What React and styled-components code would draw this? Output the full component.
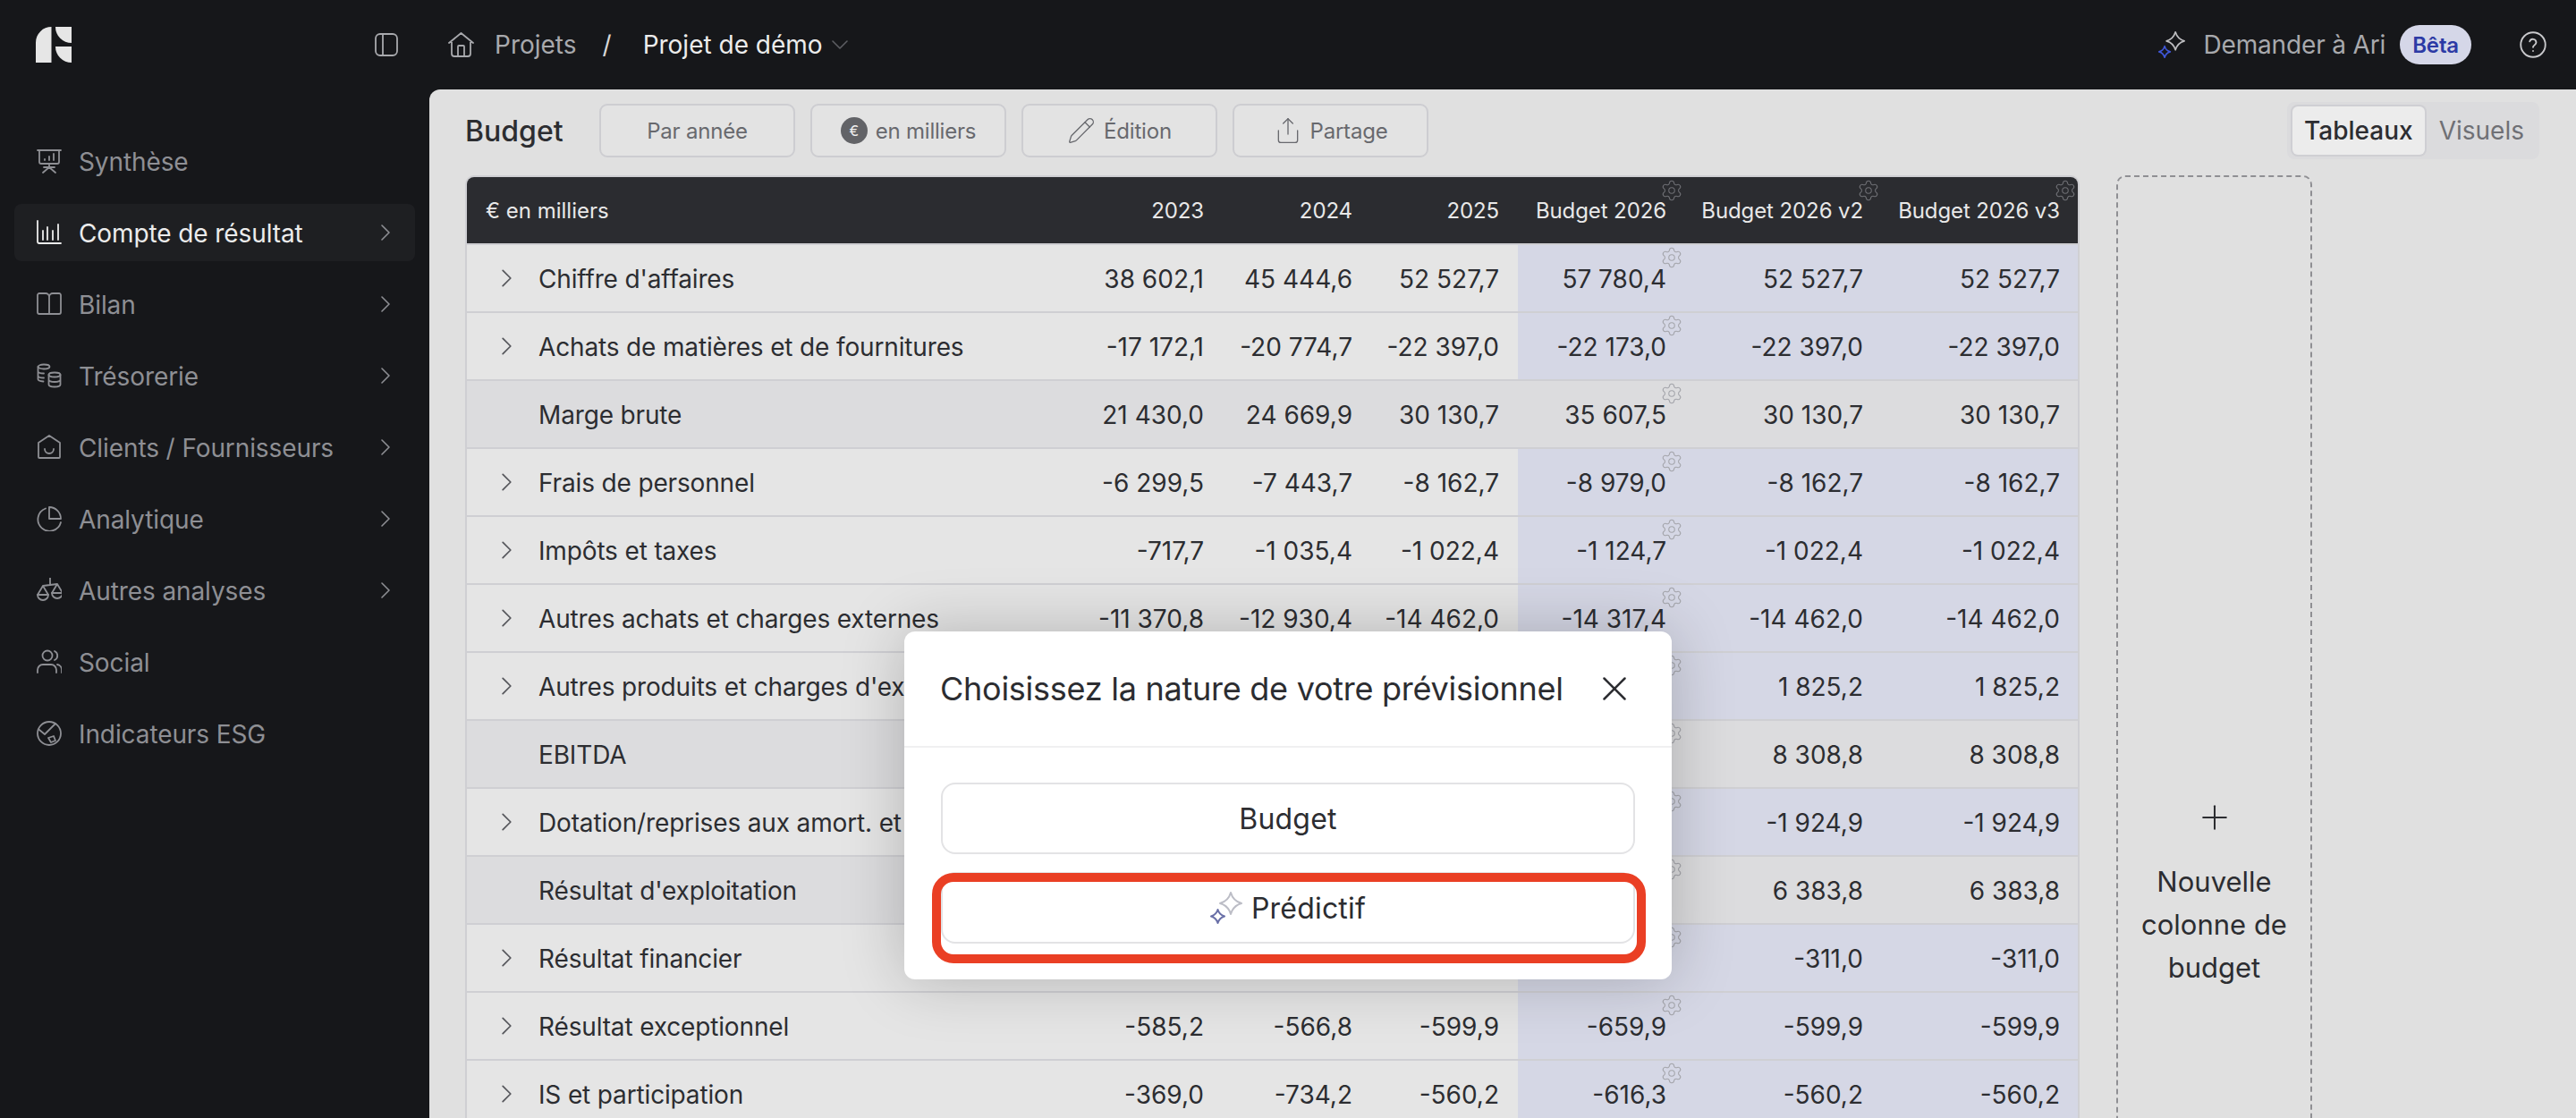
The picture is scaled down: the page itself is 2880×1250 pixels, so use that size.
import React from 'react'
import styled, { createGlobalStyle } from 'styled-components'
import { Settings, Share, X, Plus, Pencil } from 'lucide-react'

const GlobalStyle = createGlobalStyle`
  * { box-sizing: border-box; }
  html, body { margin: 0; padding: 0; background: #16171a; }
  body { font-family: Inter, "Noto Sans", sans-serif; }
`

const Page = styled.div`
  position: relative;
  width: 2880px;
  height: 1250px;
  overflow: hidden;
  display: flex;
  flex-direction: column;
  background: #16171a;
`

const TopBar = styled.header`
  height: 100px;
  flex-shrink: 0;
  display: flex;
  align-items: center;
  padding-right: 33px;
`

const Brand = styled.div`
  width: 480px;
  display: flex;
  align-items: center;
  justify-content: space-between;
  padding: 0 35px 0 40px;
  color: #a8a9ad;
`

const Crumbs = styled.nav`
  display: flex;
  align-items: center;
  padding-left: 21px;
  font-size: 28px;
  color: #a8a9ad;
`

const CrumbText = styled.span`
  margin-left: 23px;
`

const Slash = styled.span`
  margin: 0 35px 0 29px;
  color: #d8d8d8;
`

const CurrentCrumb = styled.span`
  color: #ececec;
`

const CaretDown = styled.svg`
  margin-left: 10px;
  color: #5d5e63;
`

const TopRight = styled.div`
  margin-left: auto;
  display: flex;
  align-items: center;
  color: #a8a9ad;
  font-size: 28px;
  letter-spacing: -0.15px;
`

const AskText = styled.span`
  margin-left: 20px;
`

const Beta = styled.span`
  margin-left: 16px;
  height: 44px;
  padding: 0 14px;
  display: flex;
  align-items: center;
  border-radius: 22px;
  background: #d5d7e8;
  color: #2c3aa5;
  font-size: 24px;
  font-weight: 600;
`

const HelpIcon = styled.svg`
  margin-left: 54px;
  color: #c9c9cc;
`

const Body = styled.div`
  flex: 1;
  min-height: 0;
  display: flex;
`

const Sidebar = styled.aside`
  width: 480px;
  flex-shrink: 0;
  padding: 48px 16px 0;
  display: flex;
  flex-direction: column;
  gap: 16px;
`

const NavItem = styled.div`
  height: 64px;
  display: flex;
  align-items: center;
  padding: 0 27px 0 25px;
  border-radius: 8px;
  font-size: 28px;
  letter-spacing: -0.1px;
  color: ${({ $active }) => ($active ? '#ececec' : '#8e8f94')};
  background: ${({ $active }) => ($active ? '#1e1f22' : 'transparent')};
`

const NavLabel = styled.span`
  margin-left: 19px;
  padding-top: 2px;
  flex: 1;
`

const Main = styled.main`
  flex: 1;
  min-width: 0;
  padding: 14px 41px 0 40px;
  background: #e0e0e0;
  border-top-left-radius: 12px;
  overflow: hidden;
`

const Toolbar = styled.div`
  height: 64px;
  display: flex;
  align-items: center;
`

const PageTitle = styled.h1`
  margin: 0 42px 0 0;
  width: 108px;
  font-size: 32px;
  font-weight: 500;
  color: #2c2d31;
`

const ToolGroup = styled.div`
  display: flex;
  gap: 17px;
`

const ToolButton = styled.div`
  width: 219px;
  height: 60px;
  display: flex;
  align-items: center;
  justify-content: center;
  gap: ${({ $gap }) => $gap || 10}px;
  border: 2px solid #cdcdd1;
  border-radius: 9px;
  background: #e3e3e3;
  color: #68696e;
  font-size: 24px;
  letter-spacing: -0.2px;
`

const EuroDot = styled.span`
  width: 30px;
  height: 30px;
  border-radius: 50%;
  display: flex;
  align-items: center;
  justify-content: center;
  background: #626367;
  color: #f0f0f0;
  font-size: 16px;
`

const Segmented = styled.div`
  margin-left: auto;
  height: 64px;
  display: flex;
  align-items: center;
  padding: 0 17px 0 6px;
  gap: 16px;
  border-radius: 8px;
  background: #dbdbdd;
`

const Segment = styled.div`
  height: 54px;
  display: flex;
  align-items: center;
  padding: ${({ $active }) => ($active ? '0 13px' : '0')};
  border-radius: 6px;
  font-size: 28px;
  font-weight: ${({ $active }) => ($active ? 450 : 400)};
  color: ${({ $active }) => ($active ? '#2c2d31' : '#6f7075')};
  background: ${({ $active }) => ($active ? '#ececec' : 'transparent')};
  box-shadow: ${({ $active }) => ($active ? '0 0 0 2px #cfcfd3' : 'none')};
`

const Content = styled.div`
  margin-top: 18px;
  display: flex;
  align-items: flex-start;
  gap: 41px;
`

const Table = styled.div`
  width: 1805px;
  flex-shrink: 0;
  border: 2px solid #cfcfd3;
  border-bottom: 0;
  border-radius: 10px 10px 0 0;
  overflow: hidden;
`

const Row = styled.div`
  display: grid;
  grid-template-columns: 678px 167px 166px 164px 187px 220px 220px;
  height: 76px;
  border-bottom: 2px solid #cfcfd3;
  background: ${({ $total }) => ($total ? '#dcdcde' : '#e5e5e5')};
`

const HeadRow = styled(Row)`
  background: #2b2c30;
`

const LabelCell = styled.div`
  display: flex;
  align-items: center;
  padding-top: 2px;
  padding-left: ${({ $flat }) => ($flat ? 80 : 38)}px;
  font-size: 28px;
  letter-spacing: -0.15px;
  color: #2c2d31;
  white-space: nowrap;
`

const Chevron = styled.svg`
  flex-shrink: 0;
  color: #8e8f94;
`

const RowChevron = styled.svg`
  flex-shrink: 0;
  margin: -2px 29px 0 0;
  color: #55565b;
`

const HeadLabel = styled.div`
  display: flex;
  align-items: center;
  padding-left: 21px;
  font-size: 24px;
  color: #e8e8e8;
`

const NumCell = styled.div`
  position: relative;
  display: flex;
  align-items: center;
  justify-content: flex-end;
  padding: 2px 21px 0 0;
  font-size: 28px;
  color: #2c2d31;
  white-space: nowrap;
  background: ${({ $budget }) => ($budget ? '#d5d7e5' : 'transparent')};
`

const HeadCell = styled(NumCell)`
  padding-top: 0;
  font-size: 24px;
  letter-spacing: -0.1px;
  color: #e8e8e8;
  background: transparent;
`

const GearSpot = styled.span`
  position: absolute;
  top: ${({ $head }) => ($head ? 2 : 1)}px;
  right: 2px;
  display: flex;
  color: ${({ $head }) => ($head ? '#6e6f74' : '#a4a5ab')};
`

const NewColumn = styled.div`
  width: 219px;
  height: 1200px;
  flex-shrink: 0;
  padding-top: 694px;
  display: flex;
  flex-direction: column;
  align-items: center;
  border: 2px dashed #8f8f93;
  border-radius: 10px;
  color: #2c2d31;
`

const NewColumnText = styled.div`
  margin-top: 26px;
  width: 190px;
  text-align: center;
  font-size: 31px;
  line-height: 48px;
`

const Overlay = styled.div`
  position: absolute;
  inset: 0;
  display: flex;
  justify-content: center;
  align-items: flex-start;
  padding-top: 706px;
`

const Modal = styled.div`
  width: 858px;
  height: 389px;
  border-radius: 12px;
  background: #ffffff;
  box-shadow: 0 0 70px rgba(0, 0, 0, 0.22);
`

const ModalHead = styled.div`
  height: 130px;
  display: flex;
  align-items: center;
  justify-content: space-between;
  padding: 0 41px 0 40px;
  border-bottom: 2px solid #f0f0f1;
`

const ModalTitle = styled.h2`
  margin: 0;
  font-size: 36px;
  font-weight: 400;
  letter-spacing: -0.26px;
  color: #2c2d31;
`

const ModalBody = styled.div`
  padding: 39px 41px 0;
  display: flex;
  flex-direction: column;
  gap: 20px;
`

const ChoiceWrap = styled.div`
  position: relative;
`

const Choice = styled.div`
  height: 80px;
  display: flex;
  align-items: center;
  justify-content: center;
  gap: 10px;
  border: 2px solid #e3e3e5;
  border-radius: 16px;
  background: #ffffff;
  font-size: 32px;
  letter-spacing: 0.2px;
  color: #2c2d31;
`

const Callout = styled.div`
  position: absolute;
  top: 1px;
  left: -10px;
  right: -12px;
  bottom: -22px;
  border: 10px solid #ea3f24;
  border-radius: 24px;
  pointer-events: none;
`

const ThinIcon = ({ size = 28, height, children, ...rest }) => (
  <svg width={size} height={height || size} viewBox={`0 0 ${size} ${height || size}`} fill="none" stroke="currentColor" strokeWidth="1.8" strokeLinecap="round" strokeLinejoin="round" {...rest}>
    {children}
  </svg>
)

const Logo = () => (
  <svg width="40" height="40" viewBox="0 0 40 40" fill="#e6e6e6">
    <path d="M0 40V17.5A17.5 17.5 0 0 1 17.5 0V40Z" />
    <path d="M22 0H40V18A18 18 0 0 1 22 0Z" />
    <path d="M22 22H40V40A18 18 0 0 1 22 22Z" />
  </svg>
)

const star = (cx, cy, r) => {
  const k = r * 0.22
  return `M${cx} ${cy - r}Q${cx + k} ${cy - k} ${cx + r} ${cy}Q${cx + k} ${cy + k} ${cx} ${cy + r}Q${cx - k} ${cy + k} ${cx - r} ${cy}Q${cx - k} ${cy - k} ${cx} ${cy - r}Z`
}

const Sparkle = ({ size, big, small }) => (
  <svg width={size} height={size} viewBox="0 0 36 36" fill="none" strokeWidth="2" strokeLinejoin="round">
    <path d={star(23, 13, 12)} stroke={big} />
    <path d={star(8.5, 27.5, 7.5)} stroke={small} />
  </svg>
)

const ChevronPath = () => <path d="M2 1L10 9L2 17" />

const navIcons = {
  synthese: (
    <>
      <path d="M1 2H27M3 2V15a2 2 0 0 0 2 2H23a2 2 0 0 0 2-2V2M14 17V21M14 21L7 27M14 21L21 27M8 21H20" />
      <path d="M9 12V13M14 9V13M19 6V13" />
    </>
  ),
  compte: <path d="M1 1V24a2 2 0 0 0 2 2H27M7 12V22M12 8V22M18 12V22M24 5V22" />,
  bilan: <path d="M14 6V25M14 6a4 4 0 0 0-4-4H3a2 2 0 0 0-2 2V23a2 2 0 0 0 2 2H25a2 2 0 0 0 2-2V4a2 2 0 0 0-2-2H18a4 4 0 0 0-4 4Z" />,
  tresorerie: (
    <>
      <ellipse cx="8" cy="4" rx="6.5" ry="2.5" />
      <path d="M1.5 4V18c0 1.3 1.8 2.2 6 2.5M1.5 9c0 1.4 2.5 2.5 6.5 2.5M1.5 14c0 1.4 2.5 2.5 6.5 2.5" />
      <ellipse cx="20" cy="13" rx="6.5" ry="2.5" />
      <path d="M13.5 13V24c0 1.4 3 2.5 6.5 2.5s6.5-1.100 6.500-2.500V13M13.500 18.500c0 1.400 3 2.500 6.500 2.500s6.500-1.100 6.500-2.500" />
    </>
  ),
  clients: <path d="M14 1L26 9V25a1 1 0 0 1-1 1H3a1 1 0 0 1-1-1V9ZM9 16a5 5 0 0 0 10 0" />,
  analytique: <path d="M10 2.500A13 13 0 1 0 27 18M14 1V14H27A13 13 0 0 0 14 1Z" />,
  analyses: (
    <>
      <path d="M15 0V7M7 9L23 7M7 9L1 19H13ZM23 7L17 17H29Z" />
      <path d="M1 19a6 6 0 0 0 12 0M17 17a6 6 0 0 0 12 0" />
    </>
  ),
  social: (
    <>
      <circle cx="12" cy="7" r="5.500" />
      <path d="M1 26V23a6 6 0 0 1 6-6H16a6 6 0 0 1 6 6V26M20 2a5.500 5.500 0 0 1 0 10M23 17a6 6 0 0 1 5 6V26" />
    </>
  ),
  esg: (
    <>
      <circle cx="14" cy="14" r="13" />
      <path d="M3 10L9 15L15 9L21 3M13 19L19 17L21 22L16 24Z" />
    </>
  ),
}

const navItems = [
  { key: 'synthese', label: 'Synthèse' },
  { key: 'compte', label: 'Compte de résultat', arrow: true, active: true },
  { key: 'bilan', label: 'Bilan', arrow: true },
  { key: 'tresorerie', label: 'Trésorerie', arrow: true },
  { key: 'clients', label: 'Clients / Fournisseurs', arrow: true },
  { key: 'analytique', label: 'Analytique', arrow: true },
  { key: 'analyses', label: 'Autres analyses', arrow: true },
  { key: 'social', label: 'Social' },
  { key: 'esg', label: 'Indicateurs ESG' },
]

const columns = ['2023', '2024', '2025', 'Budget 2026', 'Budget 2026 v2', 'Budget 2026 v3']

const rows = [
  { label: "Chiffre d'affaires", values: ['38 602,1', '45 444,6', '52 527,7', '57 780,4', '52 527,7', '52 527,7'] },
  { label: 'Achats de matières et de fournitures', values: ['-17 172,1', '-20 774,7', '-22 397,0', '-22 173,0', '-22 397,0', '-22 397,0'] },
  { label: 'Marge brute', total: true, values: ['21 430,0', '24 669,9', '30 130,7', '35 607,5', '30 130,7', '30 130,7'] },
  { label: 'Frais de personnel', values: ['-6 299,5', '-7 443,7', '-8 162,7', '-8 979,0', '-8 162,7', '-8 162,7'] },
  { label: 'Impôts et taxes', values: ['-717,7', '-1 035,4', '-1 022,4', '-1 124,7', '-1 022,4', '-1 022,4'] },
  { label: 'Autres achats et charges externes', values: ['-11 370,8', '-12 930,4', '-14 462,0', '-14 317,4', '-14 462,0', '-14 462,0'] },
  { label: "Autres produits et charges d'exploitation", values: ['1 412,6', '1 633,1', '1 825,2', '2 007,7', '1 825,2', '1 825,2'] },
  { label: 'EBITDA', total: true, values: ['4 454,4', '4 889,5', '8 308,8', '13 193,7', '8 308,8', '8 308,8'] },
  { label: 'Dotation/reprises aux amort. et prov.', values: ['-1 563,0', '-1 744,2', '-1 924,9', '-2 117,4', '-1 924,9', '-1 924,9'] },
  { label: "Résultat d'exploitation", total: true, values: ['2 891,4', '3 145,3', '6 383,8', '11 076,3', '6 383,8', '6 383,8'] },
  { label: 'Résultat financier', values: ['-254,7', '-289,3', '-311,0', '-342,1', '-311,0', '-311,0'] },
  { label: 'Résultat exceptionnel', values: ['-585,2', '-566,8', '-599,9', '-659,9', '-599,9', '-599,9'] },
  { label: 'IS et participation', values: ['-369,0', '-734,2', '-560,2', '-616,3', '-560,2', '-560,2'] },
]

const Gear = ({ head }) => (
  <GearSpot $head={head}>
    <Settings size={26} strokeWidth={1} />
  </GearSpot>
)

const App = () => (
  <Page>
    <GlobalStyle />
    <TopBar>
      <Brand>
        <Logo />
        <ThinIcon size={26} height={26}>
          <rect x="1" y="1" width="24" height="24" rx="5" />
          <path d="M9 1V25" />
        </ThinIcon>
      </Brand>
      <Crumbs>
        <ThinIcon size={29} height={28}>
          <path d="M1 12L14.500 1L28 12M4 9.500V24a3 3 0 0 0 3 3H22a3 3 0 0 0 3-3V9.500M11 27V16a1 1 0 0 1 1-1H17a1 1 0 0 1 1 1V27" />
        </ThinIcon>
        <CrumbText>Projets</CrumbText>
        <Slash>/</Slash>
        <CurrentCrumb>Projet de démo</CurrentCrumb>
        <CaretDown width="18" height="10" viewBox="0 0 18 10" fill="none" stroke="currentColor" strokeWidth="1.6" strokeLinecap="round" strokeLinejoin="round">
          <path d="M1 1L9 9L17 1" />
        </CaretDown>
      </Crumbs>
      <TopRight>
        <Sparkle size={30} big="#bdbdc0" small="#3f57d8" />
        <AskText>Demander à Ari</AskText>
        <Beta>Bêta</Beta>
        <HelpIcon width="30" height="30" viewBox="0 0 24 24" fill="none" stroke="currentColor" strokeWidth="1.500" strokeLinecap="round" strokeLinejoin="round">
          <circle cx="12" cy="12" r="11" />
          <path d="M9 9a3 3 0 0 1 5.800 1c0 2-2.800 2.500-2.800 4.200M12 17.500V17.600" />
        </HelpIcon>
      </TopRight>
    </TopBar>

    <Body>
      <Sidebar>
        {navItems.map((item) => (
          <NavItem key={item.key} $active={item.active}>
            <ThinIcon>{navIcons[item.key]}</ThinIcon>
            <NavLabel>{item.label}</NavLabel>
            {item.arrow && (
              <Chevron width="12" height="18" viewBox="0 0 12 18" fill="none" stroke="currentColor" strokeWidth="1.6" strokeLinecap="round" strokeLinejoin="round">
                <ChevronPath />
              </Chevron>
            )}
          </NavItem>
        ))}
      </Sidebar>

      <Main>
        <Toolbar>
          <PageTitle>Budget</PageTitle>
          <ToolGroup>
            <ToolButton>Par année</ToolButton>
            <ToolButton $gap={9}>
              <EuroDot>€</EuroDot>
              en milliers
            </ToolButton>
            <ToolButton $gap={9}>
              <Pencil size={32} strokeWidth={1} />
              Édition
            </ToolButton>
            <ToolButton $gap={9}>
              <Share size={32} strokeWidth={1} />
              Partage
            </ToolButton>
          </ToolGroup>
          <Segmented>
            <Segment $active>Tableaux</Segment>
            <Segment>Visuels</Segment>
          </Segmented>
        </Toolbar>

        <Content>
          <Table>
            <HeadRow>
              <HeadLabel>€ en milliers</HeadLabel>
              {columns.map((col, i) => (
                <HeadCell key={col}>
                  {col}
                  {i > 2 && <Gear head />}
                </HeadCell>
              ))}
            </HeadRow>
            {rows.map((row) => (
              <Row key={row.label} $total={row.total}>
                <LabelCell $flat={row.total}>
                  {!row.total && (
                    <RowChevron width="13" height="20" viewBox="0 0 12 18" fill="none" stroke="currentColor" strokeWidth="1.6" strokeLinecap="round" strokeLinejoin="round">
                      <ChevronPath />
                    </RowChevron>
                  )}
                  {row.label}
                </LabelCell>
                {row.values.map((val, i) => (
                  <NumCell key={i} $budget={i > 2 && !row.total}>
                    {val.replace(' ', '\u00a0')}
                    {i === 3 && <Gear />}
                  </NumCell>
                ))}
              </Row>
            ))}
          </Table>
          <NewColumn>
            <Plus size={44} strokeWidth={1.1} />
            <NewColumnText>Nouvelle colonne de budget</NewColumnText>
          </NewColumn>
        </Content>
      </Main>
    </Body>

    <Overlay>
      <Modal>
        <ModalHead>
          <ModalTitle>Choisissez la nature de votre prévisionnel</ModalTitle>
          <X size={46} strokeWidth={1.3} color="#2c2d31" />
        </ModalHead>
        <ModalBody>
          <Choice>Budget</Choice>
          <ChoiceWrap>
            <Choice>
              <Sparkle size={36} big="#bcbdc6" small="#6a70a8" />
              Prédictif
            </Choice>
            <Callout />
          </ChoiceWrap>
        </ModalBody>
      </Modal>
    </Overlay>
  </Page>
)

export default App
